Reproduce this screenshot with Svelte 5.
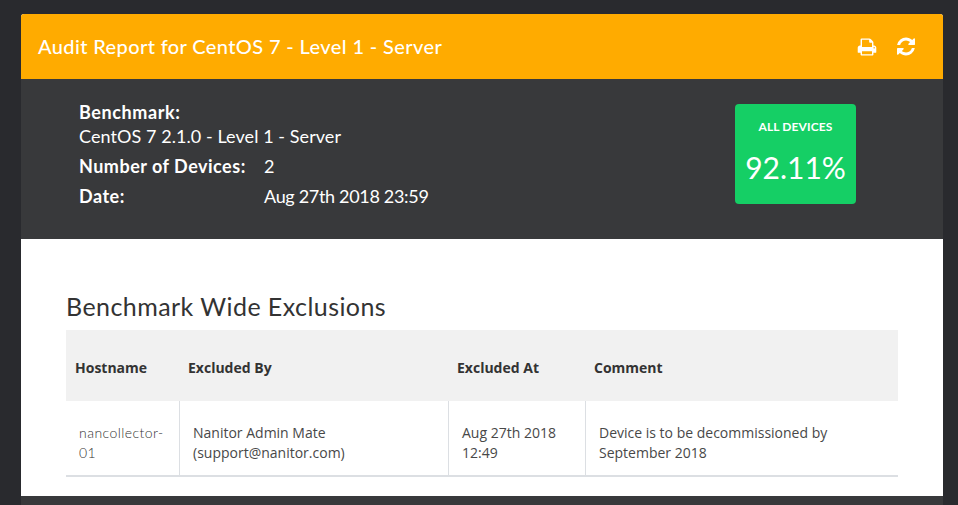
<script>
  const rows = [
    {
      hostname: 'nancollector-01',
      by: 'Nanitor Admin Mate (support@nanitor.com)',
      at: 'Aug 27th 2018 12:49',
      comment: 'Device is to be decommissioned by September 2018'
    }
  ];
</script>

<div class="page">
  <div class="report">
    <header class="report-head">
      <h1>Audit Report for CentOS 7 - Level 1 - Server</h1>
      <div class="actions">
        <svg class="icon print" viewBox="0 0 1792 1792" aria-label="Print">
          <path d="M448 1536h896v-256h-896v256zm0-640h896v-384h-160q-40 0-68-28t-28-68v-160h-640v640zm1152 64q0-26-19-45t-45-19-45 19-19 45 19 45 45 19 45-19 19-45zm128 0v416q0 13-9.5 22.5t-22.5 9.5h-224v160q0 40-28 68t-68 28h-960q-40 0-68-28t-28-68v-160h-224q-13 0-22.5-9.5t-9.5-22.5v-416q0-79 56.5-135.5t135.5-56.5h64v-544q0-40 28-68t68-28h672q40 0 88 20t76 48l152 152q28 28 48 76t20 88v256h64q79 0 135.5 56.5t56.5 135.5z" />
        </svg>
        <svg class="icon refresh" viewBox="0 0 1536 1792" aria-label="Refresh">
          <path d="M1511 1056q0 5-1 7-64 268-268 434.5t-478 166.5q-146 0-282.5-55t-243.5-157l-129 129q-19 19-45 19t-45-19-19-45v-448q0-26 19-45t45-19h448q26 0 45 19t19 45-19 45l-137 137q71 66 161 102t187 36q134 0 250-65t186-179q11-17 53-117 8-23 30-23h192q13 0 22.5 9.5t9.5 22.5zm25-800v448q0 26-19 45t-45 19h-448q-26 0-45-19t-19-45 19-45l138-138q-148-137-349-137-134 0-250 65t-186 179q-11 17-53 117-8 23-30 23h-199q-13 0-22.5-9.5t-9.5-22.5v-7q65-268 270-434.5t480-166.5q146 0 284 55.5t245 156.5l130-129q19-19 45-19t45 19 19 45z" />
        </svg>
      </div>
    </header>

    <section class="summary">
      <div class="meta">
        <div class="bench">
          <strong>Benchmark:</strong>
          <span>CentOS 7 2.1.0 - Level 1 - Server</span>
        </div>
        <div class="line"><strong>Number of Devices:</strong><span>2</span></div>
        <div class="line"><strong>Date:</strong><span class="date">Aug 27th 2018 23:59</span></div>
      </div>
      <div class="score">
        <div class="score-label">ALL DEVICES</div>
        <div class="score-value">92.11%</div>
      </div>
    </section>

    <section class="content">
      <h2>Benchmark Wide Exclusions</h2>
      <table>
        <colgroup>
          <col style="width: 113px" />
          <col style="width: 269px" />
          <col style="width: 137px" />
          <col />
        </colgroup>
        <thead>
          <tr>
            <th>Hostname</th>
            <th>Excluded By</th>
            <th>Excluded At</th>
            <th>Comment</th>
          </tr>
        </thead>
        <tbody>
          {#each rows as row}
            <tr>
              <td class="host">{row.hostname}</td>
              <td>{row.by}</td>
              <td>{row.at}</td>
              <td>{row.comment}</td>
            </tr>
          {/each}
        </tbody>
      </table>
    </section>
  </div>
  <div class="below"></div>
</div>

<style>
  :global(body) { background: #292a2e; overflow: hidden; }

  .page { padding: 14px 15px 0 21px; height: 505px; box-sizing: border-box; overflow: hidden; font-family: "Lato", sans-serif; }
  .report { background: #fff; border-radius: 3px 3px 0 0; overflow: hidden; }

  .report-head { height: 65px; background: #ffab00; display: flex; align-items: center; justify-content: space-between; padding: 0 28px 0 17px; color: #fff; }
  .report-head h1 { margin: 0 0 2px; font-size: 20px; font-weight: 500; letter-spacing: 0.38px; }
  .actions { display: flex; align-items: center; gap: 20px; }
  .icon { display: block; fill: #fff; }
  .print { width: 20px; height: 20px; }
  .refresh { width: 18px; height: 21px; }

  .summary { height: 160px; background: #38393b; color: #fff; display: flex; align-items: flex-start; justify-content: space-between; padding: 0 87px 0 58px; box-sizing: border-box; }
  .meta { padding-top: 21px; font-size: 18px; }
  .bench { margin-bottom: 1px; }
  .bench strong { display: block; line-height: 24px; letter-spacing: 0.6px; }
  .bench span { display: block; line-height: 25px; letter-spacing: 0.07px; }
  .line { display: flex; align-items: center; padding-top: 2px; height: 28px; }
  .line strong { width: 185px; letter-spacing: 0.5px; }
  .line .date { letter-spacing: -0.32px; }
  .meta strong { font-weight: 700; }

  .score { width: 121px; height: 100px; margin-top: 25px; background: #15cf65; border-radius: 4px; text-align: center; }
  .score-label { font-size: 12px; font-weight: 700; padding-top: 15px; line-height: 16px; letter-spacing: 0.1px; }
  .score-value { font-size: 30px; line-height: 40px; margin-top: 12px; }

  .content { padding: 53px 45px 19px; color: #333; }
  h2 { margin: 0 0 10px; font-size: 25px; font-weight: 400; line-height: 28px; letter-spacing: 0.44px; color: #333; }

  table { width: 832px; table-layout: fixed; border-collapse: collapse; font-family: "Open Sans", sans-serif; font-size: 14px; }
  th { height: 71px; padding: 4px 9px 0; background: #f1f1f1; text-align: left; font-weight: 700; color: #333; box-sizing: border-box; }
  td { height: 75px; padding: 10px 13px 0 13.5px; line-height: 20px; color: #484848; border-left: 1px solid #dcdfe3; border-bottom: 2px solid #dcdfe3; vertical-align: middle; box-sizing: border-box; }
  td:first-child { border-left: none; padding-left: 13px; }
  .host { font-family: "Lato", sans-serif; font-weight: 300; letter-spacing: 0.45px; color: #333; }

  .below { height: 12px; background: #38393b; }
</style>
